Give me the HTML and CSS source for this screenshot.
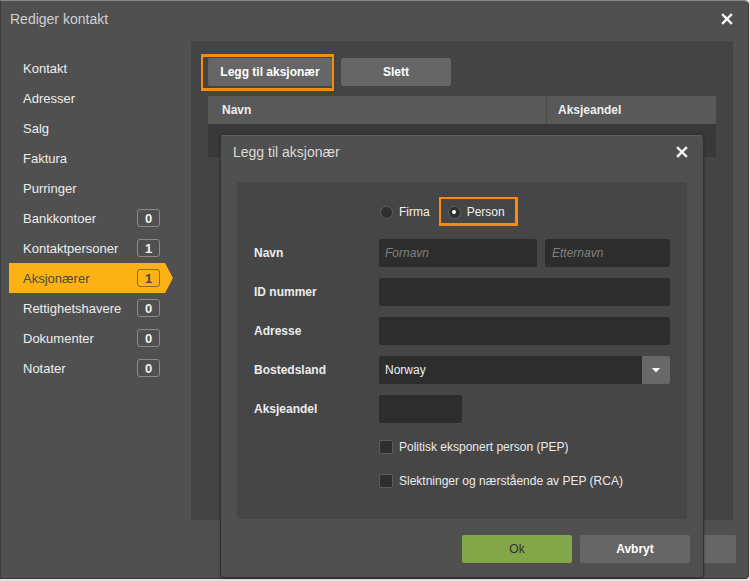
FILE: index.html
```html
<!DOCTYPE html>
<html lang="no">
<head>
<meta charset="utf-8">
<title>Rediger kontakt</title>
<link rel="stylesheet" href="styles.css">
</head>
<body>
<div class="dialog">
  <div class="dlg-title">
    <span>Rediger kontakt</span>
    <svg class="close" width="12" height="12" viewBox="0 0 12 12"><path d="M2 2L10 10M10 2L2 10" stroke="#fff" stroke-width="2.4" stroke-linecap="square"/></svg>
  </div>
  <div class="dlg-body">
    <ul class="sidebar">
      <li class="nav"><span>Kontakt</span></li>
      <li class="nav"><span>Adresser</span></li>
      <li class="nav"><span>Salg</span></li>
      <li class="nav"><span>Faktura</span></li>
      <li class="nav"><span>Purringer</span></li>
      <li class="nav"><span>Bankkontoer</span><span class="badge">0</span></li>
      <li class="nav"><span>Kontaktpersoner</span><span class="badge">1</span></li>
      <li class="nav active"><span>Aksjonærer</span><span class="badge">1</span></li>
      <li class="nav"><span>Rettighetshavere</span><span class="badge">0</span></li>
      <li class="nav"><span>Dokumenter</span><span class="badge">0</span></li>
      <li class="nav"><span>Notater</span><span class="badge">0</span></li>
    </ul>
    <div class="panel">
      <div class="toolbar">
        <div class="hl-wrap">
          <button class="btn btn-gray btn-add">Legg til aksjonær</button>
          <span class="hl hl-add"></span>
        </div>
        <button class="btn btn-gray btn-del">Slett</button>
      </div>
      <div class="table">
        <div class="thead">
          <div class="th th-name">Navn</div>
          <div class="th th-share">Aksjeandel</div>
        </div>
        <div class="trow"></div>
      </div>
    </div>
  </div>
  <div class="dlg-footer">
    <button class="btn btn-gray btn-foot">Ok</button>
    <button class="btn btn-gray btn-foot">Avbryt</button>
  </div>

  <div class="modal">
    <div class="modal-title">
      <span>Legg til aksjonær</span>
      <svg class="close" width="12" height="12" viewBox="0 0 12 12"><path d="M2 2L10 10M10 2L2 10" stroke="#fff" stroke-width="2.4" stroke-linecap="square"/></svg>
    </div>
    <div class="modal-panel">
      <div class="radio-row">
        <span class="radio"></span><span class="radio-label">Firma</span>
        <span class="person-opt">
          <span class="radio checked"></span><span class="radio-label">Person</span>
          <span class="hl hl-person"></span>
        </span>
      </div>
      <div class="form-row first">
        <label class="lbl">Navn</label>
        <div class="name-inputs">
          <div class="input in-first">Fornavn</div>
          <div class="input in-last">Etternavn</div>
        </div>
      </div>
      <div class="form-row">
        <label class="lbl">ID nummer</label>
        <div class="input"></div>
      </div>
      <div class="form-row">
        <label class="lbl">Adresse</label>
        <div class="input"></div>
      </div>
      <div class="form-row">
        <label class="lbl">Bostedsland</label>
        <div class="select">
          <span class="select-val">Norway</span>
          <span class="select-btn"><svg width="8" height="5" viewBox="0 0 8 5"><path d="M0 0H8L4 4.5Z" fill="#fff"/></svg></span>
        </div>
      </div>
      <div class="form-row">
        <label class="lbl">Aksjeandel</label>
        <div class="input in-share"></div>
      </div>
      <div class="check-row first-check">
        <span class="checkbox"></span><span class="check-label">Politisk eksponert person (PEP)</span>
      </div>
      <div class="check-row">
        <span class="checkbox"></span><span class="check-label">Slektninger og nærstående av PEP (RCA)</span>
      </div>
    </div>
    <div class="modal-footer">
      <button class="btn btn-ok">Ok</button>
      <button class="btn btn-gray btn-cancel">Avbryt</button>
    </div>
  </div>
</div>
</body>
</html>
```

FILE: styles.css
```css
* { box-sizing: border-box; }
html, body { margin: 0; padding: 0; }
body {
  background: #e4e4e4;
  font-family: "Liberation Sans", Arial, sans-serif;
  width: 750px;
  height: 581px;
  overflow: hidden;
}
.dialog {
  position: relative;
  width: 749px;
  height: 579px;
  background: #505050;
  border: 1px solid #3a3a3a;
  border-top-color: #8a8a8a;
  border-radius: 0 5px 4px 0;
  display: flex;
  flex-direction: column;
}
.dlg-title {
  height: 40px;
  display: flex;
  align-items: center;
  justify-content: space-between;
  padding: 0 15px 4px 9px;
  font-size: 14px;
  color: #d0d0d0;
}
.close { display: block; }
.dlg-body {
  display: flex;
  height: 479px;
}
.sidebar {
  list-style: none;
  margin: 0;
  padding: 12px 0 0 8px;
  width: 190px;
}
.nav {
  position: relative;
  width: 156px;
  height: 30px;
  padding: 0 5px 0 14px;
  display: flex;
  align-items: center;
  justify-content: space-between;
  font-size: 13px;
  color: #ededed;
}
.badge {
  width: 23px;
  height: 18px;
  border: 1px solid #8a8a8a;
  border-radius: 3px;
  font-weight: bold;
  font-size: 13px;
  display: flex;
  align-items: center;
  justify-content: center;
  color: #f0f0f0;
}
.nav.active {
  background: #fbb214;
  color: #4a4a4a;
}
.nav.active::after {
  content: "";
  position: absolute;
  right: -8px;
  top: 0;
  border-left: 8px solid #fbb214;
  border-top: 15px solid transparent;
  border-bottom: 15px solid transparent;
}
.nav.active .badge {
  border-color: #8f6a14;
  color: #4a4a4a;
}
.panel {
  width: 542px;
  background: #444444;
  padding: 17px 17px;
}
.toolbar {
  display: flex;
  gap: 9px;
}
.hl-wrap { position: relative; }
.hl {
  position: absolute;
  border: 2px solid #fb8a0c;
  pointer-events: none;
}
.hl-add {
  left: -7px;
  top: -4px;
  right: -2px;
  bottom: -5px;
  border-width: 3px 2px 3px 2px;
}
.btn {
  font-family: "Liberation Sans", Arial, sans-serif;
  font-size: 12px;
  border: none;
  border-radius: 2px;
  height: 28px;
  padding: 0;
  cursor: pointer;
}
.btn-gray {
  background: #666666;
  color: #ffffff;
  font-weight: bold;
}
.btn-add { width: 124px; display: block; }
.btn-del { width: 110px; }
.table {
  margin-top: 10px;
  width: 508px;
}
.thead {
  display: flex;
  height: 28px;
  background: #595959;
}
.th {
  display: flex;
  align-items: center;
  font-size: 12px;
  font-weight: bold;
  color: #eeeeee;
}
.th-name {
  width: 339px;
  padding-left: 14px;
  border-right: 1px solid #4a4a4a;
}
.th-share { padding-left: 11px; }
.trow {
  height: 33px;
  background: #393939;
}
.dlg-footer {
  flex: 1;
  display: flex;
  justify-content: flex-end;
  gap: 8px;
  padding: 15px 12px 0 0;
}
.btn-foot { width: 110px; }

/* modal */
.modal {
  position: absolute;
  left: 219px;
  top: 134px;
  width: 484px;
  height: 443px;
  background: #505050;
  border: 1px solid #333333;
  border-top-color: #5e5e5e;
  border-radius: 4px;
  box-shadow: 0 0 3px rgba(0,0,0,0.35);
}
.modal-title {
  height: 34px;
  display: flex;
  align-items: center;
  justify-content: space-between;
  padding: 0 15px 2px 12px;
  font-size: 14px;
  color: #dcdcdc;
}
.modal-panel {
  margin: 12px 16px 0 16px;
  height: 337px;
  background: #464646;
  padding: 16px 17px 0 17px;
  border-radius: 2px;
}
.radio-row {
  display: flex;
  align-items: center;
  height: 28px;
  padding-left: 126px;
  font-size: 12px;
  color: #f0f0f0;
}
.radio {
  position: relative;
  width: 13px;
  height: 13px;
  border-radius: 50%;
  background: #2f2f2f;
  border: 1px solid #5e5e5e;
  flex: none;
}
.radio.checked::after {
  content: "";
  position: absolute;
  left: 3.5px;
  top: 3.5px;
  width: 4px;
  height: 4px;
  border-radius: 50%;
  background: #ffffff;
}
.radio-label { margin-left: 6px; }
.person-opt {
  position: relative;
  display: flex;
  align-items: center;
  margin-left: 18px;
}
.hl-person {
  left: -9px;
  top: -8px;
  right: -13px;
  bottom: -7px;
  border-width: 2px 3px 3px 2px;
}
.form-row {
  display: flex;
  align-items: center;
  margin-top: 11px;
}
.form-row.first { margin-top: 13px; }
.lbl {
  width: 125px;
  flex: none;
  font-size: 12px;
  font-weight: bold;
  color: #ececec;
}
.input {
  width: 291px;
  height: 28px;
  background: #2d2d2d;
  border-radius: 2px;
  font-size: 12px;
  font-style: italic;
  color: #808080;
  display: flex;
  align-items: center;
  padding-left: 6px;
}
.name-inputs {
  display: flex;
  gap: 8px;
}
.in-first { width: 158px; }
.in-last { width: 125px; padding-left: 7px; }
.in-share { width: 83px; }
.select {
  width: 291px;
  height: 28px;
  display: flex;
  background: #2d2d2d;
  border-radius: 2px;
  overflow: hidden;
}
.select-val {
  flex: 1;
  display: flex;
  align-items: center;
  padding-left: 6px;
  font-size: 12px;
  color: #f2f2f2;
}
.select-btn {
  width: 28px;
  background: #686868;
  display: flex;
  align-items: center;
  justify-content: center;
}
.check-row {
  display: flex;
  align-items: center;
  height: 20px;
  padding-left: 125px;
  margin-top: 14px;
  font-size: 12px;
  color: #ececec;
}
.checkbox {
  width: 14px;
  height: 14px;
  background: #2e2e2e;
  border: 1px solid #5c5c5c;
  border-radius: 2px;
  flex: none;
}
.check-label { margin-left: 6px; }
.modal-footer {
  display: flex;
  justify-content: flex-end;
  gap: 8px;
  padding: 16px 13px 0 0;
}
.btn-ok {
  width: 110px;
  background: #82a648;
  color: #2e2e2e;
}
.btn-cancel { width: 110px; }
```
